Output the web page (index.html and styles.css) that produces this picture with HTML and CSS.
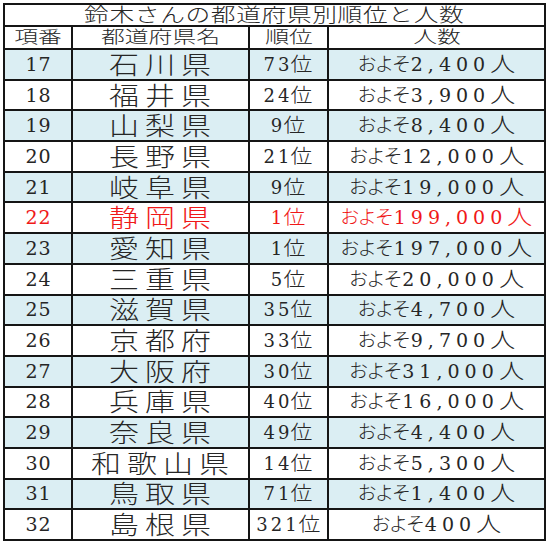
FILE: index.html
```html
<!DOCTYPE html>
<html lang="ja">
<head>
<meta charset="utf-8">
<title>鈴木さんの都道府県別順位と人数</title>
<link rel="stylesheet" href="styles.css">
</head>
<body>
<table class="tbl">
  <colgroup>
    <col class="c1"><col class="c2"><col class="c3"><col class="c4">
  </colgroup>
  <thead>
    <tr class="title"><th colspan="4"><span class="s st">鈴木さんの都道府県別順位と人数</span></th></tr>
    <tr class="head">
      <th><span class="s sh">項番</span></th>
      <th><span class="s sh">都道府県名</span></th>
      <th><span class="s sh">順位</span></th>
      <th><span class="s sh">人数</span></th>
    </tr>
  </thead>
  <tbody>
    <tr class="b"><td><span class="no">17</span></td><td><span class="s sp">石川県</span></td><td><span class="rd">73</span><span class="s ri">位</span></td><td><span class="k">およそ</span><span class="d">2,400</span><span class="s ni">人</span></td></tr>
    <tr><td><span class="no">18</span></td><td><span class="s sp">福井県</span></td><td><span class="rd">24</span><span class="s ri">位</span></td><td><span class="k">およそ</span><span class="d">3,900</span><span class="s ni">人</span></td></tr>
    <tr class="b"><td><span class="no">19</span></td><td><span class="s sp">山梨県</span></td><td><span class="rd">9</span><span class="s ri">位</span></td><td><span class="k">およそ</span><span class="d">8,400</span><span class="s ni">人</span></td></tr>
    <tr><td><span class="no">20</span></td><td><span class="s sp">長野県</span></td><td><span class="rd">21</span><span class="s ri">位</span></td><td><span class="k">およそ</span><span class="d">12,000</span><span class="s ni">人</span></td></tr>
    <tr class="b"><td><span class="no">21</span></td><td><span class="s sp">岐阜県</span></td><td><span class="rd">9</span><span class="s ri">位</span></td><td><span class="k">およそ</span><span class="d">19,000</span><span class="s ni">人</span></td></tr>
    <tr class="red"><td><span class="no">22</span></td><td><span class="s sp">静岡県</span></td><td><span class="rd">1</span><span class="s ri">位</span></td><td><span class="k">およそ</span><span class="d">199,000</span><span class="s ni">人</span></td></tr>
    <tr class="b"><td><span class="no">23</span></td><td><span class="s sp">愛知県</span></td><td><span class="rd">1</span><span class="s ri">位</span></td><td><span class="k">およそ</span><span class="d">197,000</span><span class="s ni">人</span></td></tr>
    <tr><td><span class="no">24</span></td><td><span class="s sp">三重県</span></td><td><span class="rd">5</span><span class="s ri">位</span></td><td><span class="k">およそ</span><span class="d">20,000</span><span class="s ni">人</span></td></tr>
    <tr class="b"><td><span class="no">25</span></td><td><span class="s sp">滋賀県</span></td><td><span class="rd">35</span><span class="s ri">位</span></td><td><span class="k">およそ</span><span class="d">4,700</span><span class="s ni">人</span></td></tr>
    <tr><td><span class="no">26</span></td><td><span class="s sp">京都府</span></td><td><span class="rd">33</span><span class="s ri">位</span></td><td><span class="k">およそ</span><span class="d">9,700</span><span class="s ni">人</span></td></tr>
    <tr class="b"><td><span class="no">27</span></td><td><span class="s sp">大阪府</span></td><td><span class="rd">30</span><span class="s ri">位</span></td><td><span class="k">およそ</span><span class="d">31,000</span><span class="s ni">人</span></td></tr>
    <tr><td><span class="no">28</span></td><td><span class="s sp">兵庫県</span></td><td><span class="rd">40</span><span class="s ri">位</span></td><td><span class="k">およそ</span><span class="d">16,000</span><span class="s ni">人</span></td></tr>
    <tr class="b"><td><span class="no">29</span></td><td><span class="s sp">奈良県</span></td><td><span class="rd">49</span><span class="s ri">位</span></td><td><span class="k">およそ</span><span class="d">4,400</span><span class="s ni">人</span></td></tr>
    <tr><td><span class="no">30</span></td><td><span class="s sp">和歌山県</span></td><td><span class="rd">14</span><span class="s ri">位</span></td><td><span class="k">およそ</span><span class="d">5,300</span><span class="s ni">人</span></td></tr>
    <tr class="b"><td><span class="no">31</span></td><td><span class="s sp">鳥取県</span></td><td><span class="rd">71</span><span class="s ri">位</span></td><td><span class="k">およそ</span><span class="d">1,400</span><span class="s ni">人</span></td></tr>
    <tr><td><span class="no">32</span></td><td><span class="s sp">島根県</span></td><td><span class="rd">321</span><span class="s ri">位</span></td><td><span class="k">およそ</span><span class="d">400</span><span class="s ni">人</span></td></tr>
  </tbody>
</table>
</body>
</html>
```
FILE: styles.css
```css
html, body {
  margin: 0;
  padding: 0;
  background: #ffffff;
}
body {
  padding: 3px 0 0 3px;
  font-family: "Liberation Serif", "Noto Sans CJK JP", serif;
  color: #262626;
}
.tbl {
  border-collapse: collapse;
  table-layout: fixed;
  width: 541px;
}
.c1 { width: 68px; }
.c2 { width: 177px; }
.c3 { width: 79px; }
.c4 { width: 217px; }
.tbl th, .tbl td {
  border: 2px solid #151515;
  padding: 0;
  text-align: center;
  vertical-align: middle;
  font-weight: normal;
  white-space: nowrap;
  overflow: hidden;
  line-height: 1;
}
.title { height: 22px; }
.head { height: 23px; }
.tbl tbody tr { height: 30.7px; }
.tbl tbody tr.b { background: #dbeef3; }
.tbl tr.red { color: #f01818; }
.s {
  display: inline-block;
  font-weight: 300;
}
.st {
  font-size: 19px;
  transform: scaleX(1.3);
  letter-spacing: 0.5px;
}
.sh {
  font-size: 17px;
  transform: scaleX(1.4);
}
.sp {
  font-size: 25px;
  transform: scaleX(1.2);
  letter-spacing: 5px;
  margin-right: -5px;
  position: relative;
  top: 1px;
}
.no, .rd, .d {
  font-family: "DejaVu Serif", "Liberation Serif", serif;
}
.no {
  font-size: 19px;
  letter-spacing: 1px;
  margin-right: -1px;
}
.rd {
  font-size: 18px;
  letter-spacing: 3px;
}
.ri {
  font-size: 19px;
  transform: scaleX(1.15);
  margin: 0 2px 0 0;
}
.k {
  font-size: 19px;
  font-weight: 300;
  font-feature-settings: "palt";
}
.d {
  font-size: 19px;
  letter-spacing: 5px;
  margin-left: 1px;
}
.ni {
  font-size: 21px;
  transform: scaleX(1.2);
  margin: 0 2px;
}
```
